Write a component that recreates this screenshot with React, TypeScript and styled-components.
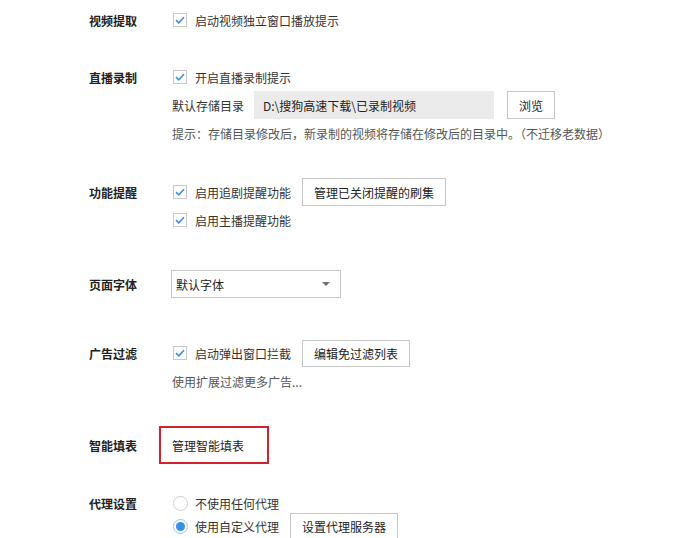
import React from "react";
import styled, { createGlobalStyle } from "styled-components";

const GlobalStyle = createGlobalStyle`
  html, body {
    margin: 0;
    padding: 0;
    background: #ffffff;
  }
  body {
    font-family: "Noto Sans CJK SC", "Microsoft YaHei", "Liberation Sans", sans-serif;
    font-size: 12px;
    color: #333333;
  }
`;

const Page = styled.div`
  width: 690px;
  height: 538px;
  overflow: hidden;
  padding: 6px 0 0 89px;
  box-sizing: border-box;
`;

const Section = styled.section<{ $top: number }>`
  display: grid;
  grid-template-columns: 83px 1fr;
  margin-top: ${(p) => p.$top}px;
`;

const Label = styled.div<{ $h?: number }>`
  height: ${(p) => p.$h ?? 28}px;
  display: flex;
  align-items: center;
  font-weight: bold;
  color: #222222;
`;

const Lines = styled.div`
  display: flex;
  flex-direction: column;
`;

const Line = styled.div<{ $h?: number }>`
  height: ${(p) => p.$h ?? 28}px;
  display: flex;
  align-items: center;
  white-space: nowrap;
`;

const CheckBox = styled.span`
  width: 14px;
  height: 14px;
  margin: 0 8px 0 1px;
  box-sizing: border-box;
  border: 1px solid #c9c9c9;
  background: #fff;
  display: inline-flex;
  align-items: center;
  justify-content: center;
  flex: none;
`;

const Radio = styled.span<{ $on?: boolean }>`
  width: 15px;
  height: 15px;
  margin: 0 7px 0 1px;
  box-sizing: border-box;
  border-radius: 50%;
  border: 1px solid ${(p) => (p.$on ? "#9cc4ef" : "#cfcfcf")};
  background: #fff;
  display: inline-flex;
  align-items: center;
  justify-content: center;
  flex: none;

  &::after {
    content: "";
    display: ${(p) => (p.$on ? "block" : "none")};
    width: 9px;
    height: 9px;
    border-radius: 50%;
    background: #3a8ee8;
  }
`;

const Button = styled.button<{ $h?: number }>`
  font: inherit;
  color: #222;
  height: ${(p) => p.$h ?? 28}px;
  padding: 0 11px;
  margin-left: 11px;
  border: 1px solid #c6c6c6;
  background: #ffffff;
  box-sizing: border-box;
  flex: none;
`;

const PathBox = styled.div`
  width: 240px;
  height: 28px;
  margin-left: 10px;
  padding-left: 9px;
  box-sizing: border-box;
  background: #ebebeb;
  display: flex;
  align-items: center;
  color: #222;
`;

const Hint = styled.span`
  color: #555555;
`;

const Select = styled.div`
  width: 170px;
  height: 28px;
  margin-left: -1px;
  box-sizing: border-box;
  border: 1px solid #c8c8c8;
  padding: 0 10px 0 4px;
  display: flex;
  align-items: center;
  justify-content: space-between;
  color: #222;

  &::after {
    content: "";
    border-left: 4px solid transparent;
    border-right: 4px solid transparent;
    border-top: 4px solid #707070;
  }
`;

const FocusBox = styled.div`
  width: 110px;
  height: 38px;
  margin-left: -13px;
  box-sizing: border-box;
  border: 2px solid #d1222f;
  padding-left: 11px;
  display: flex;
  align-items: center;
  color: #222;
`;

const Check = () => (
  <CheckBox>
    <svg width="10" height="8" viewBox="0 0 10 8">
      <path d="M1 4.2 L3.8 6.8 L9 1.2" fill="none" stroke="#3b8ee6" strokeWidth="1.6" />
    </svg>
  </CheckBox>
);

export default function App() {
  return (
    <>
      <GlobalStyle />
      <Page>
        <Section $top={0}>
          <Label>视频提取</Label>
          <Lines>
            <Line>
              <Check />
              启动视频独立窗口播放提示
            </Line>
          </Lines>
        </Section>

        <Section $top={29}>
          <Label>直播录制</Label>
          <Lines>
            <Line>
              <Check />
              开启直播录制提示
            </Line>
            <Line>
              默认存储目录
              <PathBox>D:\搜狗高速下载\已录制视频</PathBox>
              <Button style={{ marginLeft: 13 }}>浏览</Button>
            </Line>
            <Line>
              <Hint>提示：存储目录修改后，新录制的视频将存储在修改后的目录中。（不迁移老数据）</Hint>
            </Line>
          </Lines>
        </Section>

        <Section $top={31}>
          <Label>功能提醒</Label>
          <Lines>
            <Line>
              <Check />
              启用追剧提醒功能
              <Button>管理已关闭提醒的刷集</Button>
            </Line>
            <Line>
              <Check />
              启用主播提醒功能
            </Line>
          </Lines>
        </Section>

        <Section $top={36}>
          <Label>页面字体</Label>
          <Lines>
            <Line>
              <Select>默认字体</Select>
            </Line>
          </Lines>
        </Section>

        <Section $top={41}>
          <Label>广告过滤</Label>
          <Lines>
            <Line>
              <Check />
              启动弹出窗口拦截
              <Button $h={27}>编辑免过滤列表</Button>
            </Line>
            <Line>
              <Hint>使用扩展过滤更多广告...</Hint>
            </Line>
          </Lines>
        </Section>

        <Section $top={31}>
          <Label $h={38}>智能填表</Label>
          <Lines>
            <Line $h={38}>
              <FocusBox>管理智能填表</FocusBox>
            </Line>
          </Lines>
        </Section>

        <Section $top={29}>
          <Label $h={20}>代理设置</Label>
          <Lines>
            <Line $h={20}>
              <Radio />
              不使用任何代理
            </Line>
            <Line $h={26}>
              <Radio $on />
              使用自定义代理
              <Button $h={26}>设置代理服务器</Button>
            </Line>
          </Lines>
        </Section>
      </Page>
    </>
  );
}
